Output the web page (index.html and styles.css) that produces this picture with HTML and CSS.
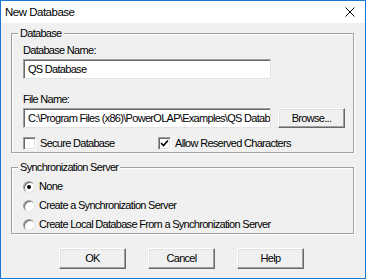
FILE: index.html
```html
<!DOCTYPE html>
<html>
<head>
<meta charset="utf-8">
<link rel="stylesheet" href="styles.css">
</head>
<body>
<div class="window">
  <div class="titlebar">
    <span class="title">New Database</span>
    <svg class="close" width="10" height="10" viewBox="0 0 10 10"><path d="M0.5 0.5L9.5 9.5M9.5 0.5L0.5 9.5" stroke="#000" stroke-width="1" fill="none"/></svg>
  </div>
  <div class="client">
    <div class="group group-db">
      <span class="legend">Database</span>
      <div class="label">Database Name:</div>
      <div class="textbox wide">QS Database</div>
      <div class="label label-file">File Name:</div>
      <div class="row">
        <div class="textbox wide">C:\Program Files (x86)\PowerOLAP\Examples\QS Database</div>
        <div class="button browse">Browse...</div>
      </div>
      <div class="row checks">
        <label class="check check1"><span class="box"></span>Secure Database</label>
        <label class="check"><span class="box checked"><svg width="9" height="9" viewBox="0 0 9 9"><path d="M1 4L3.5 6.5L8 1.5" stroke="#000" stroke-width="1.6" fill="none"/></svg></span>Allow Reserved Characters</label>
      </div>
    </div>
    <div class="group group-sync">
      <span class="legend">Synchronization Server</span>
      <label class="radio"><span class="circle on"></span>None</label>
      <label class="radio"><span class="circle"></span>Create a Synchronization Server</label>
      <label class="radio"><span class="circle"></span>Create Local Database From a Synchronization Server</label>
    </div>
    <div class="buttons">
      <div class="button">OK</div>
      <div class="button">Cancel</div>
      <div class="button">Help</div>
    </div>
  </div>
</div>
</body>
</html>
```
FILE: styles.css
```css
* { box-sizing: border-box; }
body {
  margin: 0;
  font-family: "Liberation Sans", Arial, sans-serif;
  font-size: 11px;
  letter-spacing: -0.7px;
  color: #000;
}
.window {
  width: 366px;
  height: 279px;
  border: 1px solid #1979d2;
  display: flex;
  flex-direction: column;
  background: #f0f0f0;
}
.titlebar {
  height: 22px;
  flex-shrink: 0;
  background: #fff;
  display: flex;
  align-items: center;
  justify-content: space-between;
  padding: 0 10px 0 4px;
}
.title {
  font-size: 11.5px;
  letter-spacing: -0.5px;
  color: #000;
}
.close { display: block; }
.client {
  flex: 1;
  padding: 10px 11px 0 10px;
  display: flex;
  flex-direction: column;
}
.group {
  position: relative;
  flex-shrink: 0;
  border: 1px solid #a0a0a0;
  box-shadow: 1px 1px 0 #fff, inset 1px 1px 0 #fff;
  display: flex;
  flex-direction: column;
}
.legend {
  position: absolute;
  top: -7px;
  left: 6px;
  padding: 0 2px;
  background: #f0f0f0;
  line-height: 13px;
  white-space: nowrap;
}
.group-db {
  height: 120px;
  padding: 10px 0 0 11px;
}
.label { line-height: 13px; flex-shrink: 0; }
.textbox {
  flex-shrink: 0;
  height: 20px;
  margin-top: 2px;
  background: #fff;
  border-top: 1px solid #a0a0a0;
  border-left: 1px solid #a0a0a0;
  border-right: 1px solid #e3e3e3;
  border-bottom: 1px solid #e3e3e3;
  box-shadow: inset 1px 1px 0 #696969;
  padding: 3px 0 0 4px;
  line-height: 13px;
  white-space: nowrap;
  overflow: hidden;
}
.wide { width: 248px; }
.label-file { margin-top: 14px; }
.row {
  display: flex;
  align-items: flex-start;
  flex-shrink: 0;
}
.row .textbox { margin-top: 2px; }
.button {
  flex-shrink: 0;
  width: 67px;
  height: 21px;
  background: #f0f0f0;
  border-top: 1px solid #fff;
  border-left: 1px solid #fff;
  border-right: 1px solid #696969;
  border-bottom: 1px solid #696969;
  box-shadow: inset -1px -1px 0 #a0a0a0, inset 1px 1px 0 #e3e3e3;
  display: flex;
  align-items: center;
  justify-content: center;
  line-height: 13px;
}
.browse {
  margin-left: 7px;
  margin-top: 2px;
  height: 20px;
}
.checks { margin-top: 9px; }
.check {
  display: flex;
  align-items: center;
  line-height: 13px;
  white-space: nowrap;
}
.check1 { width: 135px; }
.box {
  flex-shrink: 0;
  width: 13px;
  height: 13px;
  background: #fff;
  border-top: 1px solid #a0a0a0;
  border-left: 1px solid #a0a0a0;
  border-right: 1px solid #fff;
  border-bottom: 1px solid #fff;
  box-shadow: inset 1px 1px 0 #696969, inset -1px -1px 0 #e3e3e3;
  margin-right: 4px;
  display: flex;
  align-items: center;
  justify-content: center;
}
.group-sync {
  margin-top: 14px;
  height: 67px;
  padding: 12px 0 0 11px;
  gap: 6px;
}
.radio {
  display: flex;
  align-items: center;
  line-height: 13px;
  white-space: nowrap;
}
.circle {
  flex-shrink: 0;
  width: 12px;
  height: 12px;
  border-radius: 50%;
  background: #fff;
  border: 1px solid;
  border-color: #a0a0a0 #e3e3e3 #e3e3e3 #a0a0a0;
  box-shadow: inset 1px 1px 0 #696969;
  margin-right: 4px;
  position: relative;
}
.circle.on::after {
  content: "";
  position: absolute;
  left: 3px;
  top: 3px;
  width: 4px;
  height: 4px;
  border-radius: 50%;
  background: #000;
}
.buttons {
  display: flex;
  gap: 22px;
  margin-top: 14px;
  padding-left: 48px;
}
```
